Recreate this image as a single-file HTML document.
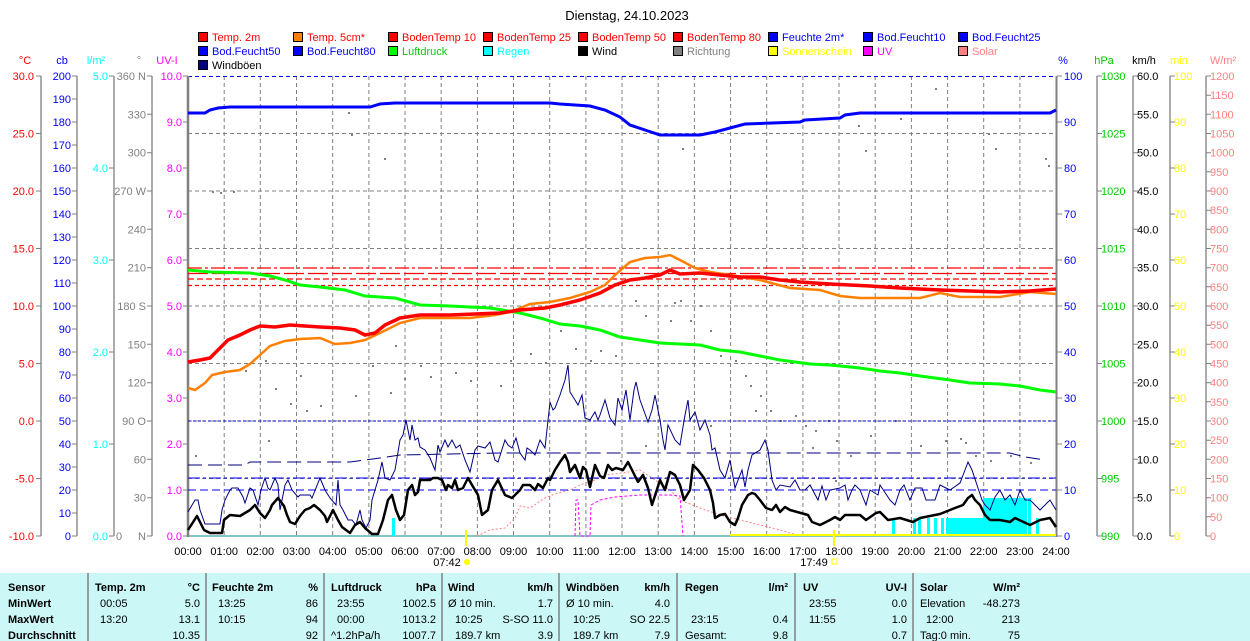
<!DOCTYPE html>
<html><head><meta charset="utf-8"><style>
body{margin:0;width:1250px;height:641px;background:#fff;overflow:hidden;font-family:"Liberation Sans",sans-serif}
svg{position:absolute;left:0;top:0}
text{font-family:"Liberation Sans",sans-serif;font-size:11px}
.tb text{font-size:11px}
.b{font-weight:bold}
</style></head><body>
<svg width="1250" height="641" viewBox="0 0 1250 641">
<text x="627" y="20" text-anchor="middle" fill="#000" style="font-size:13px">Dienstag, 24.10.2023</text>
<g stroke="#000" stroke-width="1">
<rect x="198.5" y="32.5" width="9" height="9" fill="#f00"/><rect x="293.5" y="32.5" width="9" height="9" fill="#ff8000"/><rect x="388.5" y="32.5" width="9" height="9" fill="#f00"/><rect x="483.5" y="32.5" width="9" height="9" fill="#f00"/><rect x="578.5" y="32.5" width="9" height="9" fill="#f00"/><rect x="673.5" y="32.5" width="9" height="9" fill="#f00"/><rect x="768.5" y="32.5" width="9" height="9" fill="#00f"/><rect x="863.5" y="32.5" width="9" height="9" fill="#00f"/><rect x="958.5" y="32.5" width="9" height="9" fill="#00f"/>
<rect x="198.5" y="46.5" width="9" height="9" fill="#00f"/><rect x="293.5" y="46.5" width="9" height="9" fill="#00f"/><rect x="388.5" y="46.5" width="9" height="9" fill="#0f0"/><rect x="483.5" y="46.5" width="9" height="9" fill="#0ff"/><rect x="578.5" y="46.5" width="9" height="9" fill="#000"/><rect x="673.5" y="46.5" width="9" height="9" fill="#808080"/><rect x="768.5" y="46.5" width="9" height="9" fill="#ff0"/><rect x="863.5" y="46.5" width="9" height="9" fill="#f0f"/><rect x="958.5" y="46.5" width="9" height="9" fill="#ff8080"/>
<rect x="198.5" y="60.5" width="9" height="9" fill="#000080"/>
</g>
<g>
<text x="212" y="41" fill="#f00">Temp. 2m</text><text x="307" y="41" fill="#f00">Temp. 5cm*</text><text x="402" y="41" fill="#f00">BodenTemp 10</text><text x="497" y="41" fill="#f00">BodenTemp 25</text><text x="592" y="41" fill="#f00">BodenTemp 50</text><text x="687" y="41" fill="#f00">BodenTemp 80</text><text x="782" y="41" fill="#00f">Feuchte 2m*</text><text x="877" y="41" fill="#00f">Bod.Feucht10</text><text x="972" y="41" fill="#00f">Bod.Feucht25</text>
<text x="212" y="55" fill="#00f">Bod.Feucht50</text><text x="307" y="55" fill="#00f">Bod.Feucht80</text><text x="402" y="55" fill="#0c0">Luftdruck</text><text x="497" y="55" fill="#0ff">Regen</text><text x="592" y="55" fill="#000">Wind</text><text x="687" y="55" fill="#808080">Richtung</text><text x="782" y="55" fill="#ff0">Sonnenschein</text><text x="877" y="55" fill="#f0f">UV</text><text x="972" y="55" fill="#ff8080">Solar</text>
<text x="212" y="69" fill="#000">Windböen</text>
</g>
<text x="25" y="64" fill="#f00" text-anchor="middle">°C</text><text x="62" y="64" fill="#00f" text-anchor="middle">cb</text><text x="96" y="64" fill="#0ff" text-anchor="middle">l/m²</text><text x="139" y="64" fill="#808080" text-anchor="middle">°</text><text x="167" y="64" fill="#f0f" text-anchor="middle">UV-I</text>
<text x="1063" y="64" fill="#00f" text-anchor="middle">%</text><text x="1104" y="64" fill="#0c0" text-anchor="middle">hPa</text><text x="1144" y="64" fill="#000" text-anchor="middle">km/h</text><text x="1179" y="64" fill="#ff0" text-anchor="middle">min</text><text x="1223" y="64" fill="#ff8080" text-anchor="middle">W/m²</text>
<g stroke="#808080" stroke-width="1.3">
<line x1="41" y1="76" x2="41" y2="536"/><line x1="77" y1="76" x2="77" y2="536"/><line x1="114" y1="76" x2="114" y2="536"/><line x1="152" y1="76" x2="152" y2="536"/>
<line x1="1097" y1="76" x2="1097" y2="536"/><line x1="1133" y1="76" x2="1133" y2="536"/><line x1="1170" y1="76" x2="1170" y2="536"/><line x1="1206" y1="76" x2="1206" y2="536"/>
</g>
<g stroke="#808080" stroke-width="1">
<path d="M36 76h5M36 133.5h5M36 191h5M36 248.5h5M36 306h5M36 363.5h5M36 421h5M36 478.5h5M36 536h5"/>
<path d="M72 76h5M72 99h5M72 122h5M72 145h5M72 168h5M72 191h5M72 214h5M72 237h5M72 260h5M72 283h5M72 306h5M72 329h5M72 352h5M72 375h5M72 398h5M72 421h5M72 444h5M72 467h5M72 490h5M72 513h5M72 536h5"/>
<path d="M109 76h5M109 168h5M109 260h5M109 352h5M109 444h5M109 536h5"/>
<path d="M147 76h5M147 114.3h5M147 152.7h5M147 191h5M147 229.3h5M147 267.7h5M147 306h5M147 344.3h5M147 382.7h5M147 421h5M147 459.3h5M147 497.7h5M147 536h5"/>
<path d="M183 76h5M183 122h5M183 168h5M183 214h5M183 260h5M183 306h5M183 352h5M183 398h5M183 444h5M183 490h5M183 536h5"/>
<path d="M1057 76h5M1057 122h5M1057 168h5M1057 214h5M1057 260h5M1057 306h5M1057 352h5M1057 398h5M1057 444h5M1057 490h5M1057 536h5"/>
<path d="M1097 76h5M1097 133.5h5M1097 191h5M1097 248.5h5M1097 306h5M1097 363.5h5M1097 421h5M1097 478.5h5M1097 536h5"/>
<path d="M1133 76h5M1133 114.3h5M1133 152.7h5M1133 191h5M1133 229.3h5M1133 267.7h5M1133 306h5M1133 344.3h5M1133 382.7h5M1133 421h5M1133 459.3h5M1133 497.7h5M1133 536h5"/>
<path d="M1170 76h5M1170 122h5M1170 168h5M1170 214h5M1170 260h5M1170 306h5M1170 352h5M1170 398h5M1170 444h5M1170 490h5M1170 536h5"/>
<path d="M1206 76h5M1206 95.2h5M1206 114.3h5M1206 133.5h5M1206 152.7h5M1206 171.8h5M1206 191h5M1206 210.2h5M1206 229.3h5M1206 248.5h5M1206 267.7h5M1206 286.8h5M1206 306h5M1206 325.2h5M1206 344.3h5M1206 363.5h5M1206 382.7h5M1206 401.8h5M1206 421h5M1206 440.2h5M1206 459.3h5M1206 478.5h5M1206 497.7h5M1206 516.8h5M1206 536h5"/>
</g>
<g fill="#f00" text-anchor="end">
<text x="34" y="80">30.0</text><text x="34" y="137.5">25.0</text><text x="34" y="195">20.0</text><text x="34" y="252.5">15.0</text><text x="34" y="310">10.0</text><text x="34" y="367.5">5.0</text><text x="34" y="425">0.0</text><text x="34" y="482.5">-5.0</text><text x="34" y="540">-10.0</text>
</g>
<g fill="#00f" text-anchor="end">
<text x="71" y="80">200</text><text x="71" y="103">190</text><text x="71" y="126">180</text><text x="71" y="149">170</text><text x="71" y="172">160</text><text x="71" y="195">150</text><text x="71" y="218">140</text><text x="71" y="241">130</text><text x="71" y="264">120</text><text x="71" y="287">110</text><text x="71" y="310">100</text><text x="71" y="333">90</text><text x="71" y="356">80</text><text x="71" y="379">70</text><text x="71" y="402">60</text><text x="71" y="425">50</text><text x="71" y="448">40</text><text x="71" y="471">30</text><text x="71" y="494">20</text><text x="71" y="517">10</text><text x="71" y="540">0</text>
</g>
<g fill="#0ff" text-anchor="end">
<text x="108" y="80">5.0</text><text x="108" y="172">4.0</text><text x="108" y="264">3.0</text><text x="108" y="356">2.0</text><text x="108" y="448">1.0</text><text x="108" y="540">0.0</text>
</g>
<g fill="#808080" text-anchor="end">
<text x="146" y="80">360 N</text><text x="146" y="118.3">330</text><text x="146" y="156.7">300</text><text x="146" y="195">270 W</text><text x="146" y="233.3">240</text><text x="146" y="271.7">210</text><text x="146" y="310">180 S</text><text x="146" y="348.3">150</text><text x="146" y="386.7">120</text><text x="146" y="425">90 O</text><text x="146" y="463.3">60</text><text x="146" y="501.7">30</text><text x="146" y="540">N</text>
<text x="116" y="540" text-anchor="start">0</text>
</g>
<g fill="#f0f" text-anchor="end">
<text x="182" y="80">10.0</text><text x="182" y="126">9.0</text><text x="182" y="172">8.0</text><text x="182" y="218">7.0</text><text x="182" y="264">6.0</text><text x="182" y="310">5.0</text><text x="182" y="356">4.0</text><text x="182" y="402">3.0</text><text x="182" y="448">2.0</text><text x="182" y="494">1.0</text><text x="182" y="540">0.0</text>
</g>
<g fill="#00f">
<text x="1064" y="80">100</text><text x="1064" y="126">90</text><text x="1064" y="172">80</text><text x="1064" y="218">70</text><text x="1064" y="264">60</text><text x="1064" y="310">50</text><text x="1064" y="356">40</text><text x="1064" y="402">30</text><text x="1064" y="448">20</text><text x="1064" y="494">10</text><text x="1064" y="540">0</text>
</g>
<g fill="#0c0">
<text x="1101" y="80">1030</text><text x="1101" y="137.5">1025</text><text x="1101" y="195">1020</text><text x="1101" y="252.5">1015</text><text x="1101" y="310">1010</text><text x="1101" y="367.5">1005</text><text x="1101" y="425">1000</text><text x="1101" y="482.5">995</text><text x="1101" y="540">990</text>
</g>
<g fill="#000">
<text x="1137" y="80">60.0</text><text x="1137" y="118.3">55.0</text><text x="1137" y="156.7">50.0</text><text x="1137" y="195">45.0</text><text x="1137" y="233.3">40.0</text><text x="1137" y="271.7">35.0</text><text x="1137" y="310">30.0</text><text x="1137" y="348.3">25.0</text><text x="1137" y="386.7">20.0</text><text x="1137" y="425">15.0</text><text x="1137" y="463.3">10.0</text><text x="1137" y="501.7">5.0</text><text x="1137" y="540">0.0</text>
</g>
<g fill="#ff0">
<text x="1174" y="80">100</text><text x="1174" y="126">90</text><text x="1174" y="172">80</text><text x="1174" y="218">70</text><text x="1174" y="264">60</text><text x="1174" y="310">50</text><text x="1174" y="356">40</text><text x="1174" y="402">30</text><text x="1174" y="448">20</text><text x="1174" y="494">10</text><text x="1174" y="540">0</text>
</g>
<g fill="#ff8080">
<text x="1210" y="80">1200</text><text x="1210" y="99.2">1150</text><text x="1210" y="118.3">1100</text><text x="1210" y="137.5">1050</text><text x="1210" y="156.7">1000</text><text x="1210" y="175.8">950</text><text x="1210" y="195">900</text><text x="1210" y="214.2">850</text><text x="1210" y="233.3">800</text><text x="1210" y="252.5">750</text><text x="1210" y="271.7">700</text><text x="1210" y="290.8">650</text><text x="1210" y="310">600</text><text x="1210" y="329.2">550</text><text x="1210" y="348.3">500</text><text x="1210" y="367.5">450</text><text x="1210" y="386.7">400</text><text x="1210" y="405.8">350</text><text x="1210" y="425">300</text><text x="1210" y="444.2">250</text><text x="1210" y="463.3">200</text><text x="1210" y="482.5">150</text><text x="1210" y="501.7">100</text><text x="1210" y="520.8">50</text><text x="1210" y="540">0</text>
</g>
<g stroke="#808080" stroke-width="1" stroke-dasharray="4,3">
<path d="M188 133.5H1056M188 191H1056M188 248.5H1056M188 306H1056M188 363.5H1056M188 421H1056M188 478.5H1056"/>
<path d="M224.2 76V536M260.3 76V536M296.5 76V536M332.7 76V536M368.9 76V536M405 76V536M441.2 76V536M477.4 76V536M513.5 76V536M549.7 76V536M585.9 76V536M622 76V536M658.2 76V536M694.4 76V536M730.6 76V536M766.7 76V536M802.9 76V536M839 76V536M875.2 76V536M911.4 76V536M947.6 76V536M983.7 76V536M1019.9 76V536"/>
</g>
<line x1="188" y1="76.5" x2="1056" y2="76.5" stroke="#00f" stroke-dasharray="4,3"/>
<line x1="188" y1="536" x2="1056" y2="536" stroke="#60b0b0" stroke-width="1.5"/>
<line x1="188" y1="76" x2="188" y2="537" stroke="#808080" stroke-width="2.5"/>
<line x1="1056.5" y1="76" x2="1056.5" y2="537" stroke="#808080" stroke-width="2"/>
<g fill="#808080">
<rect x="348" y="112" width="2" height="2"/><rect x="351" y="134" width="2" height="2"/><rect x="384" y="158" width="2" height="2"/><rect x="212" y="191" width="2" height="2"/><rect x="220" y="192" width="2" height="2"/><rect x="233" y="191" width="2" height="2"/><rect x="395" y="345" width="2" height="2"/><rect x="404" y="378" width="2" height="2"/><rect x="390" y="392" width="2" height="2"/><rect x="420" y="365" width="2" height="2"/><rect x="430" y="376" width="2" height="2"/><rect x="455" y="372" width="2" height="2"/><rect x="470" y="380" width="2" height="2"/><rect x="290" y="403" width="2" height="2"/><rect x="275" y="388" width="2" height="2"/><rect x="300" y="375" width="2" height="2"/><rect x="320" y="405" width="2" height="2"/><rect x="265" y="360" width="2" height="2"/><rect x="245" y="370" width="2" height="2"/><rect x="195" y="455" width="2" height="2"/><rect x="205" y="358" width="2" height="2"/><rect x="268" y="440" width="2" height="2"/><rect x="306" y="410" width="2" height="2"/><rect x="355" y="395" width="2" height="2"/><rect x="372" y="365" width="2" height="2"/><rect x="500" y="385" width="2" height="2"/><rect x="510" y="360" width="2" height="2"/><rect x="530" y="353" width="2" height="2"/><rect x="545" y="362" width="2" height="2"/><rect x="560" y="330" width="2" height="2"/><rect x="575" y="348" width="2" height="2"/><rect x="590" y="360" width="2" height="2"/><rect x="600" y="350" width="2" height="2"/><rect x="615" y="355" width="2" height="2"/><rect x="635" y="300" width="2" height="2"/><rect x="645" y="315" width="2" height="2"/><rect x="674" y="302" width="2" height="2"/><rect x="680" y="300" width="2" height="2"/><rect x="670" y="320" width="2" height="2"/><rect x="690" y="320" width="2" height="2"/><rect x="700" y="305" width="2" height="2"/><rect x="710" y="330" width="2" height="2"/><rect x="720" y="355" width="2" height="2"/><rect x="735" y="360" width="2" height="2"/><rect x="745" y="375" width="2" height="2"/><rect x="750" y="385" width="2" height="2"/><rect x="760" y="395" width="2" height="2"/><rect x="770" y="410" width="2" height="2"/><rect x="780" y="420" width="2" height="2"/><rect x="795" y="415" width="2" height="2"/><rect x="805" y="425" width="2" height="2"/><rect x="815" y="430" width="2" height="2"/><rect x="828" y="420" width="2" height="2"/><rect x="836" y="440" width="2" height="2"/><rect x="850" y="455" width="2" height="2"/><rect x="870" y="435" width="2" height="2"/><rect x="895" y="420" width="2" height="2"/><rect x="920" y="445" width="2" height="2"/><rect x="945" y="440" width="2" height="2"/><rect x="960" y="438" width="2" height="2"/><rect x="965" y="442" width="2" height="2"/><rect x="975" y="455" width="2" height="2"/><rect x="990" y="460" width="2" height="2"/><rect x="1010" y="455" width="2" height="2"/><rect x="1030" y="462" width="2" height="2"/><rect x="682" y="148" width="2" height="2"/><rect x="858" y="125" width="2" height="2"/><rect x="865" y="150" width="2" height="2"/><rect x="935" y="88" width="2" height="2"/><rect x="988" y="133" width="2" height="2"/><rect x="995" y="148" width="2" height="2"/><rect x="1045" y="158" width="2" height="2"/><rect x="1048" y="165" width="2" height="2"/><rect x="900" y="118" width="2" height="2"/><rect x="645" y="445" width="2" height="2"/><rect x="620" y="460" width="2" height="2"/><rect x="710" y="425" width="2" height="2"/><rect x="755" y="410" width="2" height="2"/><rect x="812" y="447" width="2" height="2"/><rect x="835" y="480" width="2" height="2"/></g>
<g fill="#0ff">
<rect x="392" y="518" width="3" height="18"/><rect x="892" y="518" width="3" height="18"/><rect x="913" y="518" width="3" height="18"/><rect x="918" y="518" width="3" height="18"/><rect x="927" y="518" width="3" height="18"/><rect x="934" y="518" width="3" height="18"/><rect x="941" y="518" width="3" height="18"/>
<rect x="946" y="518" width="38" height="18"/><rect x="983" y="498" width="44" height="38"/><rect x="1028" y="498" width="3" height="38"/><rect x="1036" y="518" width="3" height="18"/>
</g>
<polyline fill="none" stroke="#ff8080" stroke-width="1" stroke-dasharray="2,2" points="477,536 490,530 505,528 515,518 520,506 530,508 545,498 555,494 570,490 580,485 595,480 605,475 622,473 640,470 655,480 670,490 680,500 700,508 720,515 740,520 760,525 780,530 800,536"/>
<polyline fill="none" stroke="#f0f" stroke-width="1" stroke-dasharray="3,2" points="575,536 576,500 578,500 580,536 590,536 591,505 600,500 615,497 640,495 670,495 680,496 683,536"/>
<line x1="730" y1="535" x2="1056" y2="535" stroke="#ff0" stroke-width="2"/>
<line x1="466" y1="530" x2="466" y2="546" stroke="#ff0" stroke-width="2"/>
<line x1="834" y1="530" x2="834" y2="546" stroke="#ff0" stroke-width="2"/>
<line x1="188" y1="421" x2="1056" y2="421" stroke="#00c" stroke-dasharray="3,2"/>
<polyline fill="none" stroke="#000080" stroke-dasharray="14,6" points="188,465 245,465 250,462 350,462 380,458 400,455 500,453 1010,453 1025,457 1045,460"/>
<line x1="188" y1="478" x2="1056" y2="478" stroke="#00f" stroke-dasharray="12,3,3,3"/>
<line x1="188" y1="490" x2="1056" y2="490" stroke="#00f" stroke-dasharray="8,4"/>
<g stroke="#f00" stroke-width="1.3" fill="none">
<line x1="188" y1="268" x2="1056" y2="268" stroke-dasharray="14,3,3,3"/>
<line x1="188" y1="273.5" x2="1056" y2="273.5" stroke-dasharray="20,4"/>
<line x1="188" y1="279" x2="1056" y2="279" stroke-dasharray="6,3"/>
<line x1="188" y1="285.5" x2="1056" y2="285.5" stroke-dasharray="4,3"/>
</g>
<polyline fill="none" stroke="#000080" stroke-width="1" points="188,512 195,500 198,500 200,510 205,524 220,524 222,510 225,500 230,490 232,488 238,488 243,497 245,503 250,488 253,490 258,505 261,490 265,478 268,488 270,490 275,478 278,485 280,510 285,485 288,480 292,490 298,497 300,495 310,495 312,498 320,478 325,490 330,498 336,505 338,480 340,505 343,510 348,520 352,520 356,525 360,510 362,520 366,528 370,520 372,500 375,490 378,480 382,462 385,478 390,480 395,470 400,440 403,435 406,420 408,430 410,440 412,425 415,440 418,438 420,447 425,450 430,458 435,470 438,445 440,452 445,440 448,447 452,440 456,448 460,445 465,460 470,472 475,450 478,446 485,448 490,442 495,460 498,462 505,440 508,445 512,448 516,438 520,453 525,460 527,448 530,450 535,455 540,440 545,448 550,402 553,410 555,408 560,395 565,380 568,365 570,392 575,400 578,405 582,395 585,418 590,420 593,415 595,412 598,420 600,415 605,400 610,418 615,425 618,398 622,410 626,390 630,420 634,390 636,382 640,400 648,422 652,410 655,395 660,420 663,440 665,450 668,425 675,440 680,445 685,415 688,400 690,420 695,412 700,430 705,420 710,435 712,450 715,448 720,470 725,478 730,460 735,488 742,470 745,487 748,470 752,455 760,450 765,440 768,450 772,480 776,490 780,485 790,487 795,480 800,490 805,490 810,485 818,500 822,486 826,500 830,490 840,488 845,485 848,500 852,490 855,485 860,490 866,505 870,490 878,495 880,485 890,500 895,505 900,490 904,485 910,500 915,488 922,488 926,500 935,500 940,485 950,490 960,483 965,470 968,462 972,470 978,488 982,500 985,505 990,510 995,497 1000,490 1005,500 1010,495 1015,505 1020,490 1025,500 1030,500 1040,510 1050,500 1056,510"/>
<polyline fill="none" stroke="#000" stroke-width="2.5" stroke-linejoin="round" points="188,530 197,516 200,522 204,530 210,533 222,533 224,520 230,515 240,516 250,510 255,505 260,513 265,518 270,510 272,505 278,498 284,506 287,515 290,522 295,524 300,516 305,510 310,508 314,505 320,510 325,516 327,522 330,516 333,510 338,520 342,527 350,533 355,525 360,522 365,528 372,534 378,534 383,520 388,500 392,495 396,510 400,520 404,515 408,490 412,485 415,495 418,492 420,480 430,480 433,478 438,478 442,480 446,490 448,485 452,488 455,480 458,490 463,488 468,478 472,485 478,495 482,515 488,510 492,490 498,480 505,495 512,498 515,495 520,490 523,485 530,485 535,490 538,484 543,488 548,478 550,480 555,470 560,462 565,455 568,462 570,472 575,465 580,478 583,467 586,470 590,487 595,465 600,476 604,478 608,465 612,470 616,468 623,470 628,462 632,470 638,482 643,475 648,488 652,505 660,480 665,490 670,472 675,475 680,485 684,500 690,490 693,465 698,470 704,478 710,490 713,503 715,518 720,515 725,514 730,522 735,525 738,518 742,505 748,495 752,493 755,494 760,500 766,508 772,510 776,505 780,512 785,507 790,510 808,515 812,522 820,525 826,522 830,520 835,517 840,520 845,515 860,515 866,520 876,513 880,512 888,520 900,518 913,522 920,518 940,514 955,508 963,505 968,498 972,495 975,500 980,505 985,515 990,520 1000,520 1010,522 1015,518 1030,525 1040,520 1050,518 1056,527"/>
<polyline fill="none" stroke="#0f0" stroke-width="3" points="188,270 210,272 250,273 270,276 285,280 300,285 320,287 345,290 365,296 395,298 420,305 450,306 490,308 520,313 540,318 560,324 580,326 600,330 620,337 640,340 660,343 700,345 720,350 740,352 760,356 780,360 810,364 830,365 860,368 880,371 900,373 920,376 950,380 970,383 1000,384 1020,386 1040,390 1056,392"/>
<polyline fill="none" stroke="#ff8000" stroke-width="2.5" points="188,388 195,390 205,383 212,375 225,372 240,370 250,364 260,355 270,346 285,341 300,339 320,338 335,344 350,343 365,340 380,333 400,323 420,318 440,318 470,318 495,315 510,312 530,304 550,302 570,298 590,292 605,285 615,275 630,262 645,258 660,257 670,255 680,260 695,268 710,272 730,275 760,280 790,288 820,290 840,296 860,298 920,298 940,293 960,297 1000,297 1030,292 1056,294"/>
<polyline fill="none" stroke="#f00" stroke-width="3.5" points="188,362 200,360 210,358 218,350 228,340 240,335 250,330 260,326 275,327 290,325 320,327 340,328 355,330 365,335 375,333 385,325 400,318 420,315 450,315 500,313 520,310 545,308 560,305 580,300 600,293 615,285 630,280 645,278 660,275 670,270 680,274 700,273 720,275 740,277 760,277 780,280 800,282 830,284 870,286 900,288 940,290 970,291 1000,292 1030,291 1056,289"/>
<polyline fill="none" stroke="#00f" stroke-width="3" points="188,113 205,113 210,110 218,108 230,107 370,107 380,104 395,103 550,103 560,104 590,106 605,110 620,117 630,125 645,130 660,135 700,135 715,132 730,128 745,124 800,122 805,120 840,118 845,115 860,113 1050,113 1056,110"/>
<g fill="#000" text-anchor="middle">
<text x="188" y="555">00:00</text><text x="224.2" y="555">01:00</text><text x="260.3" y="555">02:00</text><text x="296.5" y="555">03:00</text><text x="332.7" y="555">04:00</text><text x="368.9" y="555">05:00</text><text x="405" y="555">06:00</text><text x="441.2" y="555">07:00</text><text x="477.4" y="555">08:00</text><text x="513.5" y="555">09:00</text><text x="549.7" y="555">10:00</text><text x="585.9" y="555">11:00</text><text x="622" y="555">12:00</text><text x="658.2" y="555">13:00</text><text x="694.4" y="555">14:00</text><text x="730.6" y="555">15:00</text><text x="766.7" y="555">16:00</text><text x="802.9" y="555">17:00</text><text x="839" y="555">18:00</text><text x="875.2" y="555">19:00</text><text x="911.4" y="555">20:00</text><text x="947.6" y="555">21:00</text><text x="983.7" y="555">22:00</text><text x="1019.9" y="555">23:00</text><text x="1056" y="555">24:00</text>
<text x="447" y="566">07:42</text><text x="814" y="566">17:49</text>
</g>
<circle cx="467" cy="562" r="3" fill="#ff0"/>
<rect x="832" y="559" width="5" height="5" fill="none" stroke="#ff0"/>
<rect x="0" y="573" width="1250" height="68" fill="#ccf7f7"/>
<g stroke="#808080" stroke-width="1.5"><path d="M88 573V641M206 573V641M324 573V641M442 573V641M559 573V641M677 573V641M795 573V641M913 573V641"/></g>
<g class="tb" fill="#000">
<g class="b"><text x="8" y="591">Sensor</text><text x="8" y="607">MinWert</text><text x="8" y="623">MaxWert</text><text x="8" y="639">Durchschnitt</text>
<text x="95" y="591">Temp. 2m</text><text x="200" y="591" text-anchor="end">°C</text>
<text x="212" y="591">Feuchte 2m</text><text x="318" y="591" text-anchor="end">%</text>
<text x="331" y="591">Luftdruck</text><text x="436" y="591" text-anchor="end">hPa</text>
<text x="448" y="591">Wind</text><text x="553" y="591" text-anchor="end">km/h</text>
<text x="566" y="591">Windböen</text><text x="670" y="591" text-anchor="end">km/h</text>
<text x="685" y="591">Regen</text><text x="788" y="591" text-anchor="end">l/m²</text>
<text x="803" y="591">UV</text><text x="907" y="591" text-anchor="end">UV-I</text>
<text x="920" y="591">Solar</text><text x="1020" y="591" text-anchor="end">W/m²</text></g>
<text x="100" y="607">00:05</text><text x="200" y="607" text-anchor="end">5.0</text><text x="100" y="623">13:20</text><text x="200" y="623" text-anchor="end">13.1</text><text x="200" y="639" text-anchor="end">10.35</text>
<text x="218" y="607">13:25</text><text x="318" y="607" text-anchor="end">86</text><text x="218" y="623">10:15</text><text x="318" y="623" text-anchor="end">94</text><text x="318" y="639" text-anchor="end">92</text>
<text x="337" y="607">23:55</text><text x="436" y="607" text-anchor="end">1002.5</text><text x="337" y="623">00:00</text><text x="436" y="623" text-anchor="end">1013.2</text><text x="331" y="639">^1.2hPa/h</text><text x="436" y="639" text-anchor="end">1007.7</text>
<text x="448" y="607">Ø 10 min.</text><text x="553" y="607" text-anchor="end">1.7</text><text x="455" y="623">10:25</text><text x="553" y="623" text-anchor="end">S-SO 11.0</text><text x="455" y="639">189.7 km</text><text x="553" y="639" text-anchor="end">3.9</text>
<text x="566" y="607">Ø 10 min.</text><text x="670" y="607" text-anchor="end">4.0</text><text x="573" y="623">10:25</text><text x="670" y="623" text-anchor="end">SO 22.5</text><text x="573" y="639">189.7 km</text><text x="670" y="639" text-anchor="end">7.9</text>
<text x="691" y="623">23:15</text><text x="788" y="623" text-anchor="end">0.4</text><text x="685" y="639">Gesamt:</text><text x="788" y="639" text-anchor="end">9.8</text>
<text x="809" y="607">23:55</text><text x="907" y="607" text-anchor="end">0.0</text><text x="809" y="623">11:55</text><text x="907" y="623" text-anchor="end">1.0</text><text x="907" y="639" text-anchor="end">0.7</text>
<text x="920" y="607">Elevation</text><text x="1020" y="607" text-anchor="end">-48.273</text><text x="926" y="623">12:00</text><text x="1020" y="623" text-anchor="end">213</text><text x="920" y="639">Tag:0 min.</text><text x="1020" y="639" text-anchor="end">75</text>
</g>
</svg>
</body></html>
